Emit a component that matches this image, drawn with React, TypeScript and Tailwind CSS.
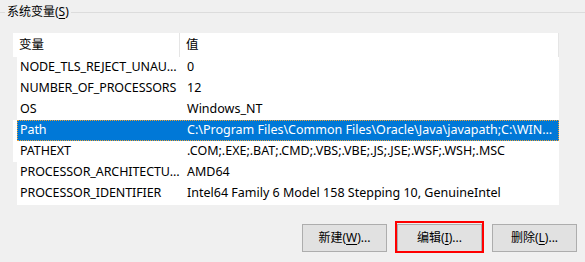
import React from 'react';

const rows: [string, string][] = [
    ['NODE_TLS_REJECT_UNAUTHORIZED', '0'],
    ['NUMBER_OF_PROCESSORS', '12'],
    ['OS', 'Windows_NT'],
    ['Path', 'C:\\Program Files\\Common Files\\Oracle\\Java\\javapath;C:\\WINDOWS\\system32;C:\\WINDOWS'],
    ['PATHEXT', '.COM;.EXE;.BAT;.CMD;.VBS;.VBE;.JS;.JSE;.WSF;.WSH;.MSC'],
    ['PROCESSOR_ARCHITECTURE', 'AMD64'],
    ['PROCESSOR_IDENTIFIER', 'Intel64 Family 6 Model 158 Stepping 10, GenuineIntel'],
];

const font = { fontFamily: '"Noto Sans", "Noto Sans CJK SC", sans-serif' };

const Btn = ({ label, hot }: { label: string; hot: string }) => (
    <button className="w-[85px] h-[28px] bg-[#e1e1e1] border border-[#adadad] text-[12px] text-black leading-none">
        {label}(<span className="underline underline-offset-2">{hot}</span>)...
    </button>
);

export default function App() {
    return (
        <div className="w-[585px] h-[262px] overflow-hidden bg-[#f0f0f0] text-black text-[12.5px] flex flex-col" style={font}>
            {/* group title */}
            <div className="flex items-center h-[24px]">
                <div className="w-[5px] h-px bg-[#dcdcdc]" />
                <span className="px-[2px] leading-none pb-[1px] text-[12px]">
                    系统变量(<span className="underline underline-offset-2">S</span>)
                </span>
                <div className="flex-1 h-px bg-[#dcdcdc]" />
            </div>

            {/* list */}
            <div className="mt-[9px] ml-[13px] w-[546px]">
                <div className="flex h-[24px] bg-white items-center">
                    <div className="w-[167px] shrink-0 h-full border-r border-[#e5e5e5] flex items-center pl-[6px]">变量</div>
                    <div className="flex-1 h-full border-r border-[#e5e5e5] flex items-center pl-[6px]">值</div>
                </div>
                <div className="flex">
                    <div className="w-[4px] shrink-0 pt-[63px]">
                        <div className="h-[42px] bg-white" />
                    </div>
                    <div className="flex-1 min-w-0 bg-white pb-px">
                        {rows.map(([k, v]) => {
                            const sel = k === 'Path';
                            return (
                                <div
                                    key={k}
                                    className={`flex h-[21px] items-center ${sel ? 'bg-[#0078d7] text-white outline outline-1 outline-dotted outline-offset-[-1px] outline-[#f0a030]' : ''}`}
                                >
                                    <div className="w-[163px] shrink-0 pl-[3px] truncate tracking-[-0.1px]">{k}</div>
                                    <div className="flex-1 min-w-0 pl-[7px] pr-[4px] truncate">{v}</div>
                                </div>
                            );
                        })}
                    </div>
                </div>
            </div>

            {/* buttons */}
            <div className="flex justify-end gap-[10px] pr-[8px] mt-[19px]">
                <Btn label="新建" hot="W" />
                <div className="relative">
                    <Btn label="编辑" hot="I" />
                    <div className="absolute -left-[2px] -top-[3px] -right-[2px] -bottom-[1px] border-2 border-[#ff0000] pointer-events-none" />
                </div>
                <Btn label="删除" hot="L" />
            </div>
        </div>
    );
}
